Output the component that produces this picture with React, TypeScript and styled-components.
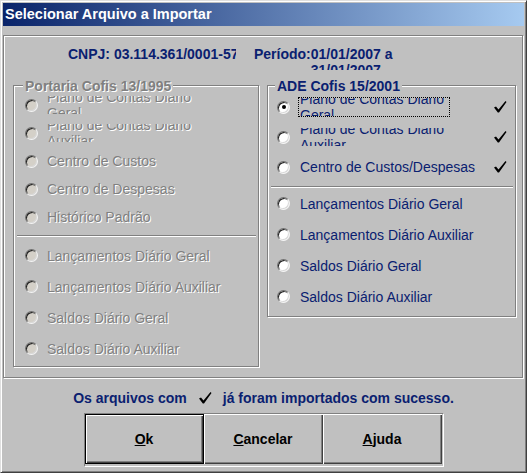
import styled, { createGlobalStyle } from 'styled-components';

const GlobalStyle = createGlobalStyle`
  html, body {
    margin: 0;
    padding: 0;
    background: #c0c0c0;
  }
  * {
    box-sizing: border-box;
  }
`;

const NAVY = '#0a2070';

const Window = styled.div`
  width: 527px;
  height: 473px;
  background: #c0c0c0;
  border-top: 1px solid #dfdfdf;
  border-left: 1px solid #dfdfdf;
  border-right: 1px solid #404040;
  border-bottom: 1px solid #404040;
  box-shadow: inset 1px 1px #fff, inset -1px -1px #808080;
  padding: 2px;
  display: flex;
  flex-direction: column;
  font-family: 'Liberation Sans', Arial, sans-serif;
`;

const TitleBar = styled.div`
  height: 23px;
  line-height: 23px;
  padding-left: 2px;
  background: linear-gradient(to right, #0a246a, #a6caf0);
  color: #fff;
  font-weight: bold;
  font-size: 14.5px;
  white-space: nowrap;
`;

const MainPanel = styled.div`
  margin-top: 9px;
  width: 520px;
  height: 343px;
  border: 1px solid #808080;
  box-shadow: inset 1px 1px #fff, 1px 1px #fff;
  padding: 10px 0 0 9px;
  display: flex;
  flex-direction: column;
`;

const Header = styled.div`
  height: 24px;
  margin-bottom: 15px;
  display: flex;
  align-items: flex-start;
  overflow: hidden;
  color: ${NAVY};
  font-weight: bold;
  font-size: 14px;
  line-height: 16px;
`;

const Cnpj = styled.div`
  margin-left: 55px;
  width: 168px;
  white-space: nowrap;
  overflow: hidden;
`;

const PeriodLabel = styled.div`
  margin-left: 18px;
  white-space: nowrap;
`;

const PeriodValue = styled.div`
  width: 100px;
`;

const Groups = styled.div`
  display: flex;
  align-items: flex-start;
  gap: 8px;
`;

const GroupBox = styled.div<{ $w: number; $h: number; $pt: number; $pl: number }>`
  position: relative;
  width: ${(p) => p.$w}px;
  height: ${(p) => p.$h}px;
  border: 1px solid #808080;
  box-shadow: inset 1px 1px #fff, 1px 1px #fff;
  padding-top: ${(p) => p.$pt}px;
  padding-left: ${(p) => p.$pl}px;
  display: flex;
  flex-direction: column;
`;

const GroupTitle = styled.div<{ $disabled?: boolean; $left: number }>`
  position: absolute;
  top: -8px;
  left: ${(p) => p.$left}px;
  padding: 0 2px;
  background: #c0c0c0;
  font-weight: bold;
  font-size: 14px;
  line-height: 16px;
  white-space: nowrap;
  color: ${(p) => (p.$disabled ? '#808080' : NAVY)};
  text-shadow: ${(p) => (p.$disabled ? '1px 1px #fff' : 'none')};
`;

const Row = styled.div<{ $h: number; $gap: number }>`
  height: ${(p) => p.$h}px;
  display: flex;
  align-items: center;
  gap: ${(p) => p.$gap}px;
  padding-right: 8px;
`;

const Radio = styled.span<{ $disabled?: boolean; $checked?: boolean }>`
  position: relative;
  flex: none;
  width: 13px;
  height: 13px;
  border-radius: 50%;
  border: 1px solid;
  border-color: #707070 #f4f4f4 #f4f4f4 #707070;
  box-shadow: inset 1px 1px #202020, inset -1px -1px #d8d8d8;
  background: ${(p) => (p.$disabled ? '#d4d0c8' : '#fff')};
  &::after {
    content: '';
    display: ${(p) => (p.$checked ? 'block' : 'none')};
    position: absolute;
    left: 3.5px;
    top: 3.5px;
    width: 4px;
    height: 4px;
    border-radius: 50%;
    background: #000;
  }
`;

const Label = styled.span<{ $disabled?: boolean; $focus?: boolean }>`
  font-size: 14px;
  line-height: 16px;
  white-space: nowrap;
  padding-left: 1px;
  border: 1px ${(p) => (p.$focus ? 'dotted #000' : 'solid transparent')};
  color: ${(p) => (p.$disabled ? '#808080' : NAVY)};
  text-shadow: ${(p) => (p.$disabled ? '1px 1px #fff' : 'none')};
`;

const WrapLabel = styled(Label)`
  width: 152px;
  height: 20px;
  overflow: hidden;
  display: flex;
  align-items: center;
  white-space: normal;
`;

const Sep = styled.div<{ $mt: number; $mb: number; $ml: number }>`
  height: 2px;
  margin: ${(p) => p.$mt}px 2px ${(p) => p.$mb}px ${(p) => p.$ml}px;
  border-top: 1px solid #808080;
  border-bottom: 1px solid #fff;
`;

const Check = styled.svg`
  flex: none;
  margin-left: auto;
`;

const Footer = styled.div`
  margin-top: 12px;
  height: 16px;
  display: flex;
  justify-content: center;
  align-items: center;
  color: ${NAVY};
  font-weight: bold;
  font-size: 14px;
  line-height: 16px;
  white-space: nowrap;
`;

const FooterCheck = styled.svg`
  margin: 0 11px 0 12px;
`;

const ButtonFrame = styled.div`
  align-self: center;
  margin-top: 7px;
  display: flex;
  border-top: 1px solid #808080;
  border-left: 1px solid #808080;
  border-right: 1px solid #fff;
  border-bottom: 1px solid #fff;
  padding: 0 1px 2px 0;
`;

const Button = styled.button<{ $default?: boolean }>`
  width: 119px;
  height: 50px;
  margin: 0;
  padding: 0;
  background: #c0c0c0;
  font-family: 'Liberation Sans', Arial, sans-serif;
  font-weight: bold;
  font-size: 14px;
  color: #000;
  border: ${(p) => (p.$default ? '1px solid #000' : 'none')};
  box-shadow: inset 1px 1px #fff, inset -1px -1px #404040, inset -2px -2px #808080;
  u {
    text-decoration: underline;
  }
`;

function CheckMark() {
  return (
    <Check width="13" height="12" viewBox="0 0 13 12">
      <polygon points="0,6.5 2,5.5 4.5,8.5 11.5,0 12.5,1 5,11.5 3.8,11.5" fill="#000" />
    </Check>
  );
}

const leftTop = ['Centro de Custos', 'Centro de Despesas', 'Histórico Padrão'];
const moves = [
  'Lançamentos Diário Geral',
  'Lançamentos Diário Auxiliar',
  'Saldos Diário Geral',
  'Saldos Diário Auxiliar',
];

export default function App() {
  return (
    <>
      <GlobalStyle />
      <Window>
        <TitleBar>Selecionar Arquivo a Importar</TitleBar>
        <MainPanel>
          <Header>
            <Cnpj>CNPJ: 03.114.361/0001-57</Cnpj>
            <PeriodLabel>Período:</PeriodLabel>
            <PeriodValue>01/01/2007 a 31/01/2007</PeriodValue>
          </Header>
          <Groups>
            <GroupBox $w={246} $h={282} $pt={5} $pl={11}>
              <GroupTitle $disabled $left={9}>
                Portaria Cofis 13/1995
              </GroupTitle>
              <Row $h={28} $gap={7}>
                <Radio $disabled />
                <WrapLabel $disabled>Plano de Contas Diário Geral</WrapLabel>
              </Row>
              <Row $h={28} $gap={7}>
                <Radio $disabled />
                <WrapLabel $disabled>Plano de Contas Diário Auxiliar</WrapLabel>
              </Row>
              {leftTop.map((t) => (
                <Row key={t} $h={28} $gap={7}>
                  <Radio $disabled />
                  <Label $disabled>{t}</Label>
                </Row>
              ))}
              <Sep $mt={4} $mb={3} $ml={-8} />
              {moves.map((t) => (
                <Row key={t} $h={31} $gap={7}>
                  <Radio $disabled />
                  <Label $disabled>{t}</Label>
                </Row>
              ))}
            </GroupBox>
            <GroupBox $w={249} $h={232} $pt={6} $pl={9}>
              <GroupTitle $left={7}>ADE Cofis 15/2001</GroupTitle>
              <Row $h={30} $gap={8}>
                <Radio $checked />
                <WrapLabel $focus>Plano de Contas Diário Geral</WrapLabel>
                <CheckMark />
              </Row>
              <Row $h={30} $gap={8}>
                <Radio />
                <WrapLabel>Plano de Contas Diário Auxiliar</WrapLabel>
                <CheckMark />
              </Row>
              <Row $h={30} $gap={8}>
                <Radio />
                <Label>Centro de Custos/Despesas</Label>
                <CheckMark />
              </Row>
              <Sep $mt={4} $mb={0} $ml={-6} />
              {moves.map((t) => (
                <Row key={t} $h={31} $gap={8}>
                  <Radio />
                  <Label>{t}</Label>
                </Row>
              ))}
            </GroupBox>
          </Groups>
        </MainPanel>
        <Footer>
          <span>Os arquivos com</span>
          <FooterCheck width="13" height="12" viewBox="0 0 13 12">
            <polygon points="0,6.5 2,5.5 4.5,8.5 11.5,0 12.5,1 5,11.5 3.8,11.5" fill="#000" />
          </FooterCheck>
          <span>já foram importados com sucesso.</span>
        </Footer>
        <ButtonFrame>
          <Button $default>
            <u>O</u>k
          </Button>
          <Button>
            <u>C</u>ancelar
          </Button>
          <Button>
            <u>A</u>juda
          </Button>
        </ButtonFrame>
      </Window>
    </>
  );
}
